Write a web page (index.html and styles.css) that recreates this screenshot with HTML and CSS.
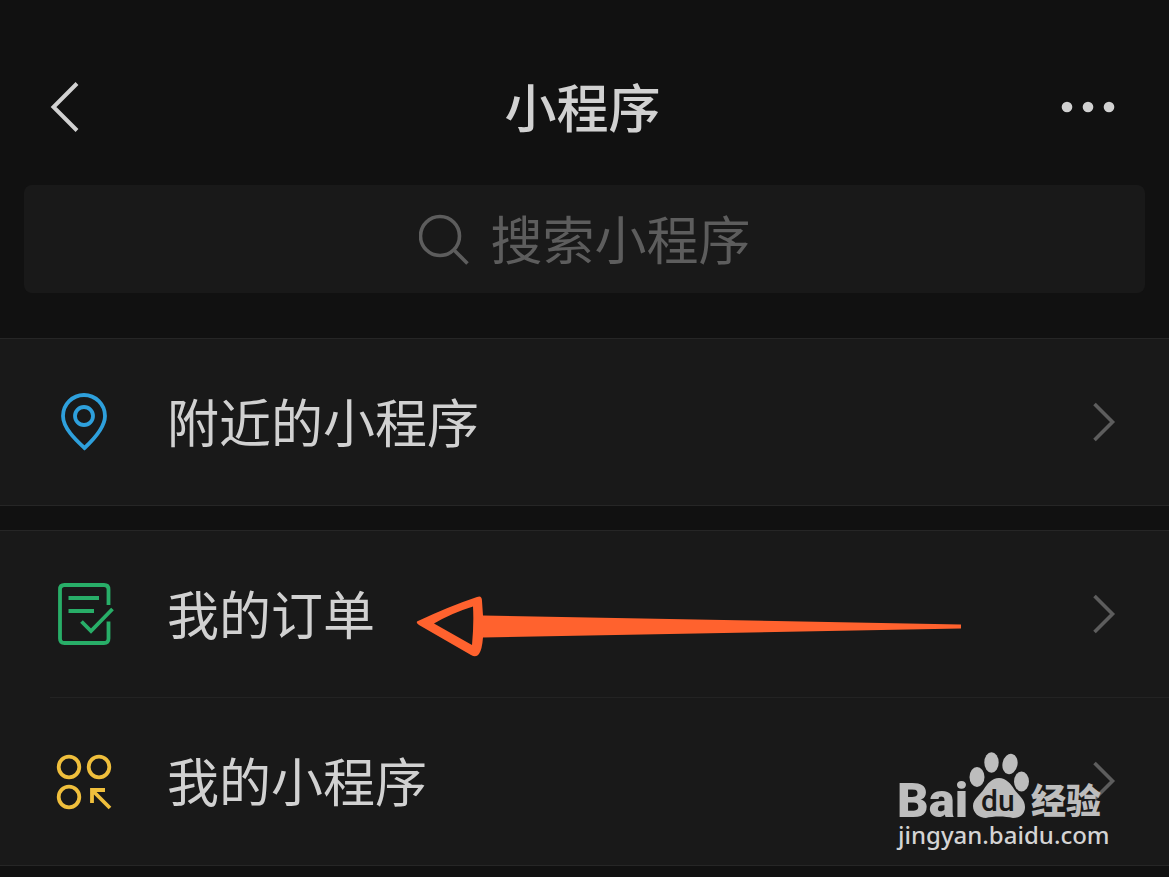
FILE: index.html
```html
<!DOCTYPE html>
<html lang="zh-CN">
<head>
  <meta charset="UTF-8">
  <meta name="viewport" content="width=device-width, initial-scale=1">
  <title>小程序</title>
  <link rel="stylesheet" href="styles.css">
</head>
<body>
  <header class="topbar">
    <button class="icon-btn" type="button" aria-label="返回">
      <svg width="30" height="52" viewBox="0 0 30 52">
        <path d="M27 2.500L3.500 26L27 49.500" fill="none" stroke="currentColor" stroke-width="4"/>
      </svg>
    </button>
    <h1>小程序</h1>
    <button class="icon-btn more" type="button" aria-label="更多">
      <svg width="54" height="12" viewBox="0 0 54 12">
        <g fill="currentColor">
          <circle cx="6" cy="6" r="5.300"/>
          <circle cx="27" cy="6" r="5.300"/>
          <circle cx="48" cy="6" r="5.300"/>
        </g>
      </svg>
    </button>
  </header>

  <label class="search">
    <svg width="52" height="52" viewBox="0 0 52 52" fill="none" stroke="currentColor" stroke-width="3.600">
      <circle cx="21" cy="23" r="19.500"/>
      <path d="M35 37L48.500 50.500"/>
    </svg>
    <input type="text" placeholder="搜索小程序" aria-label="搜索小程序">
  </label>

  <main>
    <nav class="group">
      <a class="row" href="#">
        <svg class="row-icon blue" width="68" height="68" viewBox="0 0 68 68">
          <path d="M34.500 60C27 53 13 40.500 13 28A21 21 0 0 1 55 28C55 40.500 42 53 34.500 60Z"/>
          <circle cx="34" cy="28" r="9"/>
        </svg>
        <span class="row-title">附近的小程序</span>
        <svg class="chevron" width="24" height="40" viewBox="0 0 24 40"><path d="M2.500 2L20.500 20L2.500 38"/></svg>
      </a>
    </nav>

    <nav class="group">
      <a class="row" href="#">
        <svg class="row-icon green" width="68" height="68" viewBox="0 0 68 68">
          <path d="M58.500 25V9.500Q58.500 5 54 5H14.500Q10 5 10 9.500V58.500Q10 63 14.500 63H54Q58.500 63 58.500 58.500V41.500"/>
          <path d="M18.500 18H49M18.500 31H44M31.500 41.500L41 51L62.500 29"/>
        </svg>
        <span class="row-title">我的订单</span>
        <svg class="chevron" width="24" height="40" viewBox="0 0 24 40"><path d="M2.500 2L20.500 20L2.500 38"/></svg>
        <svg class="arrow" width="548" height="62" viewBox="0 0 548 62">
          <path fill-rule="evenodd" d="M2 25Q34 10 61 1Q66 -1 66 5L67 19.500L545 28.500V32.500L67 41.500Q66 54 63 58Q60 62 55 59L3 29Q-1 26 2 25ZM18 27.500L56 49Q58 28 57 10.500Q36 17 18 27.500Z"/>
        </svg>
      </a>
      <a class="row" href="#">
        <svg class="row-icon yellow" width="68" height="68" viewBox="0 0 68 68">
          <circle cx="19" cy="20" r="10.300"/>
          <circle cx="49" cy="20" r="10.300"/>
          <circle cx="19" cy="50" r="10.300"/>
          <path d="M42 56V43H55M42 43L60 61"/>
        </svg>
        <span class="row-title">我的小程序</span>
        <svg class="chevron" width="24" height="40" viewBox="0 0 24 40"><path d="M2.500 2L20.500 20L2.500 38"/></svg>
      </a>
    </nav>
  </main>

  <svg class="watermark" width="220" height="106" viewBox="0 0 220 106">
    <text class="wm-bai" x="2" y="68">Bai</text>
    <g transform="translate(-1 -2)">
      <ellipse cx="83" cy="30" rx="7.500" ry="10"/>
      <ellipse cx="97.500" cy="15.500" rx="7.200" ry="10.300"/>
      <ellipse cx="116" cy="17" rx="7.500" ry="10.300" transform="rotate(12 116 17)"/>
      <ellipse cx="127.500" cy="34.500" rx="7.500" ry="10"/>
      <path d="M105 31C112 31 117 37 120 42C124 48 131 52 131 60C131 67 126 71 119 71C111 69 99 69 92 71C85 71 79 66 79 59C79 52 86 48 90 42C93 37 98 31 105 31Z"/>
    </g>
    <text class="wm-du" x="86" y="62">du</text>
    <text class="wm-cn" x="136" y="65">经验</text>
    <text class="wm-url" x="3" y="95">jingyan.baidu.com</text>
  </svg>
</body>
</html>
```
FILE: styles.css
```css
* {
  box-sizing: border-box;
}
body {
  margin: 0;
  position: relative;
  padding-bottom: 11px;
  background: #111;
  color: #d1d1d1;
  font-family: "Noto Sans CJK SC", sans-serif;
  font-size: 52px;
  line-height: 76px;
}
svg {
  flex: none;
}

/* top bar */
.topbar {
  display: grid;
  grid-template-columns: 1fr auto 1fr;
  align-items: center;
  padding: 69px 54px 40px 50px;
}
h1 {
  margin: 0;
  padding-bottom: 2px;
  font-size: 52px;
  font-weight: 500;
  line-height: 74px;
}
.icon-btn {
  display: flex;
  justify-self: start;
  padding: 0;
  border: none;
  background: none;
  color: inherit;
  cursor: pointer;
}
.more {
  justify-self: end;
}

/* search */
.search {
  display: flex;
  align-items: center;
  justify-content: center;
  gap: 20px;
  height: 108px;
  margin: 0 24px 45px;
  border-radius: 8px;
  background: #191919;
  color: #5d5d5d;
}
.search input {
  width: 260px;
  height: 76px;
  padding: 0 0 2px;
  border: none;
  outline: none;
  background: none;
  color: #d1d1d1;
  font: inherit;
}
.search input::placeholder {
  color: #5d5d5d;
  opacity: 1;
}

/* list */
.group {
  border-top: 1px solid #262626;
  border-bottom: 1px solid #262626;
  background: #191919;
}
.group + .group {
  margin-top: 24px;
}
.row {
  position: relative;
  display: flex;
  align-items: center;
  gap: 49px;
  height: 166px;
  padding: 0 53px 0 50px;
  color: inherit;
  text-decoration: none;
}
.row + .row {
  height: 168px;
}
.row + .row::before {
  content: "";
  position: absolute;
  top: 0;
  left: 50px;
  right: 0;
  border-top: 1px solid #232323;
}
.row-title {
  flex: 1;
  padding-bottom: 2px;
}
.row-icon {
  fill: none;
  stroke: currentColor;
  stroke-width: 3.8;
}
.blue {
  color: #2ea0dc;
}
.green {
  color: #28ae68;
}
.yellow {
  color: #f0bf3c;
}
.chevron {
  fill: none;
  stroke: #5d5d5d;
  stroke-width: 3.6;
}

.arrow {
  position: absolute;
  top: 65px;
  left: 416px;
  fill: #ff622e;
}

/* watermark */
.watermark {
  position: absolute;
  right: 54px;
  bottom: 22px;
  fill: #bdbdbd;
}
.wm-bai {
  font: 900 49px Roboto, sans-serif;
}
.wm-du {
  fill: #191919;
  font: 500 30px Roboto, sans-serif;
}
.wm-cn {
  font: 900 35px "Noto Sans CJK SC", sans-serif;
}
.wm-url {
  fill: #d4d4d4;
  font: 500 24px "Noto Sans", sans-serif;
}
```
